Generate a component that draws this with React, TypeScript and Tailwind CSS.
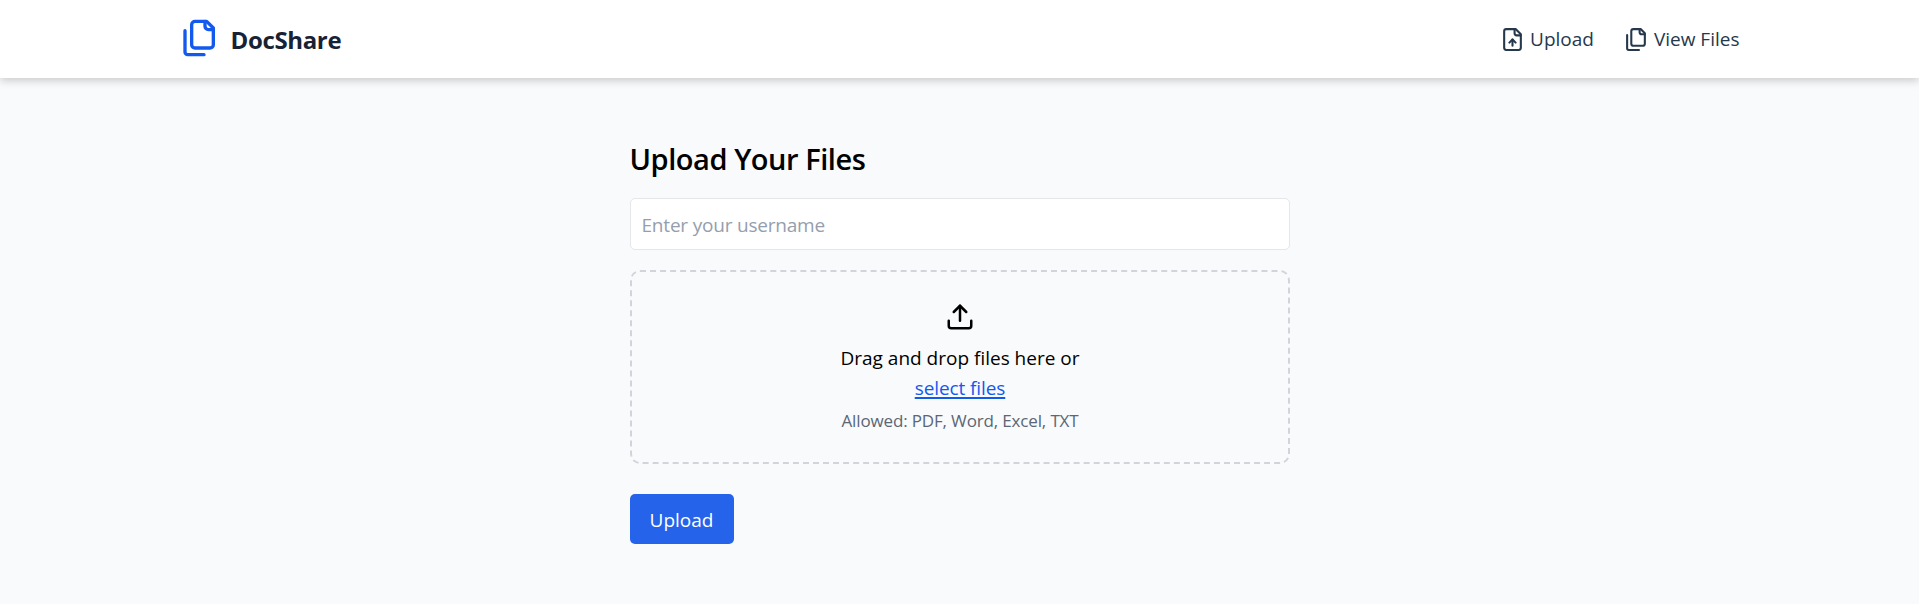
import type { ReactNode } from "react";

function Icon({ className, children }: { className: string; children: ReactNode }) {
  return (
    <svg viewBox="0 0 24 24" fill="none" stroke="currentColor" strokeWidth="2" strokeLinecap="round" strokeLinejoin="round" className={className}>
      {children}
    </svg>
  );
}

function FilesIcon({ className }: { className: string }) {
  return (
    <Icon className={className}>
      <path d="M20 7h-3a2 2 0 0 1-2-2V2" />
      <path d="M9 18a2 2 0 0 1-2-2V4a2 2 0 0 1 2-2h7l4 4v10a2 2 0 0 1-2 2Z" />
      <path d="M3 7.6v12.8A1.6 1.6 0 0 0 4.6 22h9.8" />
    </Icon>
  );
}

function FileUpIcon({ className }: { className: string }) {
  return (
    <Icon className={className}>
      <path d="M15 2H6a2 2 0 0 0-2 2v16a2 2 0 0 0 2 2h12a2 2 0 0 0 2-2V7Z" />
      <path d="M14 2v4a2 2 0 0 0 2 2h4" />
      <path d="M12 12v6" />
      <path d="m15 15-3-3-3 3" />
    </Icon>
  );
}

function UploadIcon({ className }: { className: string }) {
  return (
    <Icon className={className}>
      <path d="M21 15v4a2 2 0 0 1-2 2H5a2 2 0 0 1-2-2v-4" />
      <polyline points="17 8 12 3 7 8" />
      <line x1="12" x2="12" y1="3" y2="15" />
    </Icon>
  );
}

export default function App() {
  return (
    <div className="min-h-screen bg-[#f9fafb] font-['Open_Sans','Noto_Sans',sans-serif] text-[19px] leading-[30px] text-black">
      <nav className="h-[78px] bg-white shadow-[0_3px_8px_rgba(0,0,0,0.18)]">
        <div className="mx-auto flex h-full w-[1600px] items-center justify-between px-5">
          <a className="flex items-center gap-[11px] pb-[2px] text-[#1259ee]">
            <FilesIcon className="size-10" />
            <span className="pt-[3px] text-[24px] font-bold tracking-[-0.35px] text-[#172334]">DocShare</span>
          </a>
          <div className="flex items-center gap-[30px] text-[#26384c]">
            <a className="flex items-center gap-[5px]">
              <FileUpIcon className="size-[25px]" />
              <span>Upload</span>
            </a>
            <a className="flex items-center gap-[5px]">
              <FilesIcon className="size-[25px]" />
              <span>View Files</span>
            </a>
          </div>
        </div>
      </nav>
      <main className="mx-auto w-[660px] pt-[61px]">
        <h1 className="mb-[19px] h-10 text-[29px] leading-10 font-semibold tracking-[-0.45px]">Upload Your Files</h1>
        <input
          placeholder="Enter your username"
          className="mb-5 block h-[52px] w-full rounded-[5px] border border-[#e5e7eb] bg-white px-[11px] pt-px tracking-[-0.2px] placeholder:text-[#949eae]"
        />
        <div className="flex h-[194px] flex-col items-center rounded-[10px] border-2 border-dashed border-[#d1d5db] pt-[30px] pl-px">
          <UploadIcon className="mb-[11px] size-[30px]" />
          <p>Drag and drop files here or</p>
          <a className="tracking-[-0.1px] text-[#1259ee] underline decoration-2 underline-offset-2">select files</a>
          <p className="mt-[5px] text-[17px] leading-[25px] tracking-[-0.15px] text-[#5b6677]">Allowed: PDF, Word, Excel, TXT</p>
        </div>
        <button className="mt-[30px] h-[50px] w-[104px] rounded-[5px] bg-[#2563eb] pt-px text-white">Upload</button>
      </main>
    </div>
  );
}
